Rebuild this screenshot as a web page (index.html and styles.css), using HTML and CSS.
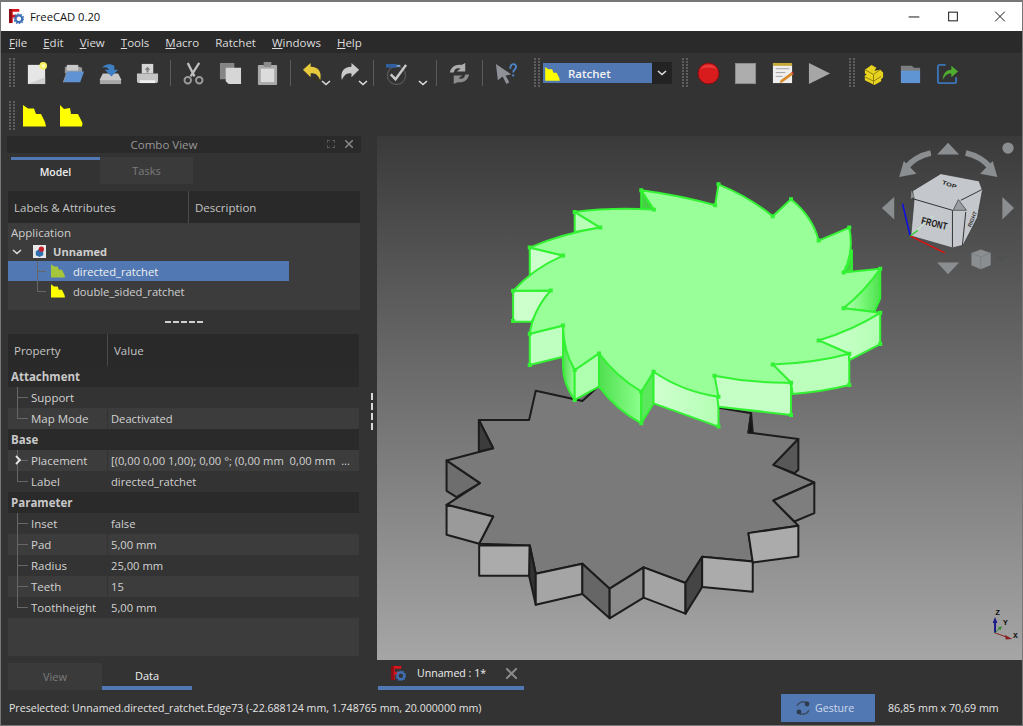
FILE: index.html
```html
<!DOCTYPE html>
<html lang="en">
<head>
<meta charset="utf-8">
<title>FreeCAD 0.20</title>
<link rel="stylesheet" href="styles.css">
</head>
<body>
<svg class="defs" width="0" height="0" aria-hidden="true">
  <defs>
    <symbol id="fc" viewBox="0 0 16 16">
      <path d="M0 0h11v3H4v3h5v3H4v6H0z" fill="#d8141c"/>
      <path d="M0 0h3v15H0z" fill="#8d0f14"/>
      <circle cx="10.5" cy="10.5" r="3.6" fill="none" stroke="#3f6fb5" stroke-width="2.4"/>
      <circle cx="10.5" cy="10.5" r="5.2" fill="none" stroke="#3f6fb5" stroke-width="1.2" stroke-dasharray="1.6 1.6"/>
    </symbol>
    <symbol id="rat" viewBox="0 0 23 22">
      <path d="M0 0l5 3.500h6l2 5.500h5l4 8 1 4.500H0z" fill="#ffff00"/>
    </symbol>
    <symbol id="rat2" viewBox="0 0 23 22">
      <path d="M0 0l4 4 6-1 1 6h7l4.500 9-.5 3.500H0z" fill="#ffff00"/>
    </symbol>
    <symbol id="ratg" viewBox="0 0 23 22">
      <path d="M0 0l5 3.500h6l2 5.500h5l4 8 1 4.500H0z" fill="#a5c63a"/>
    </symbol>
    <symbol id="chev" viewBox="0 0 10 6">
      <path d="M1 1l4 3.500L9 1" fill="none" stroke="#ddd" stroke-width="1.600"/>
    </symbol>
  </defs>
</svg>

<div class="window">
  <header class="titlebar">
    <svg class="title-icon"><use href="#fc"/></svg>
    <span class="title-text">FreeCAD 0.20</span>
    <div class="win-controls">
      <svg class="wc wc-min" viewBox="0 0 46 30"><path d="M17.500 15.500h11" stroke="#111" fill="none"/></svg>
      <svg class="wc wc-max" viewBox="0 0 46 30"><rect x="18.500" y="10.500" width="9" height="9" fill="none" stroke="#111"/></svg>
      <svg class="wc" viewBox="0 0 46 30"><path d="M18 10l10 10M28 10L18 20" stroke="#111" fill="none"/></svg>
    </div>
  </header>

  <nav class="menubar">
    <span><u>F</u>ile</span><span><u>E</u>dit</span><span><u>V</u>iew</span><span><u>T</u>ools</span><span><u>M</u>acro</span><span>Ratchet</span><span><u>W</u>indows</span><span><u>H</u>elp</span>
  </nav>

  <div class="toolbar tb1">
    <i class="grip"></i>
    <span class="tool"><svg viewBox="0 0 24 24"><rect x="3" y="3" width="18" height="20" fill="#e6e6e6"/><path d="M3 23h18V16z" fill="#cfcfcf"/><circle cx="19" cy="4" r="4" fill="#f6f060"/><circle cx="19" cy="4" r="2" fill="#fffbb0"/></svg></span>
    <span class="tool"><svg viewBox="0 0 24 24"><path d="M3 5h15l3 1v6H3z" fill="#9b9b9b"/><path d="M5 3h12v6H5z" fill="#c9c9c9"/><path d="M5 10h18l-4 11H1z" fill="#5f93d3"/><path d="M1 21L5 10v2l-3 9z" fill="#8b8b8b"/></svg></span>
    <span class="tool"><svg viewBox="0 0 24 24"><path d="M4 12h16l3 6v5H1v-5z" fill="#c8c8c8"/><path d="M1 19h22v4H1z" fill="#a6a6a6"/><path d="M3 6c3-4 9-5 13-2v4h4l-7 7-7-7h4c0-2-4-3-7-2z" fill="#3f7fc4"/></svg></span>
    <span class="tool"><svg viewBox="0 0 24 24"><path d="M6 2h12v10H6z" fill="#d5d5d5"/><path d="M1 12h22v8c0 1-1 2-2 2H3c-1 0-2-1-2-2z" fill="#c4c4c4"/><path d="M4 19h16v3H4z" fill="#efefef"/><path d="M12 5l3 3h-2v3h-2V8H9z" fill="#7d7d7d"/></svg></span>
    <i class="sep"></i>
    <span class="tool"><svg viewBox="0 0 24 24"><path d="M6 1l7 14M18 1L9 15" stroke="#bfbfbf" stroke-width="2.400" fill="none"/><circle cx="6" cy="19" r="3.400" fill="none" stroke="#9c9c9c" stroke-width="2"/><circle cx="18" cy="19" r="3.400" fill="none" stroke="#9c9c9c" stroke-width="2"/></svg></span>
    <span class="tool"><svg viewBox="0 0 24 24"><rect x="1" y="1" width="15" height="17" fill="#858585"/><path d="M7 6h16v17H10l-3-3z" fill="#d6d6d6"/></svg></span>
    <span class="tool"><svg viewBox="0 0 24 24"><rect x="2" y="3" width="20" height="21" rx="1" fill="#a9a9a9"/><rect x="8" y="0" width="8" height="5" fill="#8a8a8a"/><path d="M5 7h14v14H5z" fill="#dcdcdc"/></svg></span>
    <i class="sep"></i>
    <span class="tool tool-chev"><svg viewBox="0 0 24 24"><path d="M1 8l8-7v4c8 0 12 5 10 14-2-5-5-8-10-7v4z" fill="#e7c93c"/><path d="M11 18c4 0 8 2 8 1" stroke="#3a3010" fill="none"/></svg><svg class="mini"><use href="#chev"/></svg></span>
    <span class="tool tool-chev"><svg viewBox="0 0 24 24"><path d="M21 8l-8-7v4C5 5 1 10 3 19c2-5 5-8 10-7v4z" fill="#c9c9c9"/></svg><svg class="mini"><use href="#chev"/></svg></span>
    <i class="sep"></i>
    <span class="tool tool-wide"><svg viewBox="0 0 24 24"><circle cx="12" cy="14" r="9.500" fill="none" stroke="#555" stroke-width="1.400"/><path d="M1 2h11v4H1z" fill="#2f5f9f"/><path d="M12 3h4v2h-4z" fill="#7aa7d8"/><path d="M6 13l5 5L22 3" fill="none" stroke="#c9c9c9" stroke-width="2.600"/></svg><svg class="mini2"><use href="#chev"/></svg></span>
    <i class="sep"></i>
    <span class="tool"><svg viewBox="0 0 24 24"><path d="M2 11C3 5 8 2 14 3l4-2v9h-9l4-3c-4-1-6 0-7 4z" fill="#adadad"/><path d="M22 13c-1 6-6 9-12 8l-4 2v-9h9l-4 3c4 1 6 0 7-4z" fill="#8c8c8c"/></svg></span>
    <i class="sep"></i>
    <span class="tool"><svg viewBox="0 0 24 24"><path d="M2 2l16 11-6 1 4 7-3 2-4-8-5 4z" fill="#8e9298"/><path d="M17 7c0-6 6-6 6-2 0 3-3 3-3 6" fill="none" stroke="#4d86c8" stroke-width="2"/><circle cx="20" cy="14" r="1.200" fill="#4d86c8"/></svg></span>
    <i class="grip grip-a"></i>
    <div class="combo">
      <div class="combo-box"><svg class="combo-icon"><use href="#rat"/></svg><b>Ratchet</b></div>
      <div class="combo-arrow"><svg class="combo-chev"><use href="#chev"/></svg></div>
    </div>
    <i class="grip grip-b"></i>
    <span class="tool"><svg viewBox="0 0 24 24"><circle cx="12" cy="12" r="11" fill="#d81c1e" stroke="#7d1012"/><path d="M3 8a10 9 0 0 1 18 0c-3-3-15-3-18 0z" fill="#ea3a3a"/></svg></span>
    <span class="tool"><svg viewBox="0 0 24 24"><rect x="1.500" y="1.500" width="21" height="21" fill="#adadad" stroke="#8c8c8c"/></svg></span>
    <span class="tool"><svg viewBox="0 0 24 24"><rect x="2" y="2" width="20" height="20" fill="#eee"/><path d="M2 1h20v3H2z" fill="#c7a83a"/><path d="M5 7h14M5 11h10M5 15h7" stroke="#a0a0a0"/><path d="M10 19l11-8 2 2-11 8-3 1z" fill="#d98a2b"/><path d="M21 11l2 2 1-1-2-2z" fill="#d8322e"/></svg></span>
    <span class="tool"><svg viewBox="0 0 24 24"><path d="M1 1l22 11L1 23z" fill="#a6a6a6"/></svg></span>
    <i class="grip grip-c"></i>
    <span class="tool"><svg viewBox="0 0 24 24"><path d="M3 8l7-5 5 3-2 3 6-1 3 3v5l-2 2v2l-7 4-10-5v-5l2-1-2-1z" fill="#e8d41e"/><path d="M3 8l9 5 7-5M2 15l10 5 8-5M12 13v11" fill="none" stroke="#8d7d10" stroke-width="1"/></svg></span>
    <span class="tool"><svg viewBox="0 0 24 24"><path d="M2 4h11l3 2h6v16H2z" fill="#7d7d7d"/><path d="M2 9h20v13H2z" fill="#5f95d2"/></svg></span>
    <span class="tool"><svg viewBox="0 0 24 24"><path d="M10 3H4c-1 0-2 1-2 2v15c0 1 1 2 2 2h15c1 0 2-1 2-2v-4" fill="none" stroke="#3b74b5" stroke-width="2"/><path d="M7 19c0-7 4-11 9-11V4l7 6-7 6v-4c-4 0-7 2-9 7z" fill="#4fae2f"/></svg></span>
  </div>

  <div class="toolbar tb2">
    <i class="grip"></i>
    <span class="tool"><svg class="rat-big"><use href="#rat"/></svg></span>
    <span class="tool"><svg class="rat-big"><use href="#rat2"/></svg></span>
  </div>

  <main class="main">
    <aside class="panel">
      <div class="dock-title">
        <span>Combo View</span>
        <svg class="dock-btn b1" viewBox="0 0 8 8"><path d="M0 3V0h3M5 0h3v3M8 5v3H5M3 8H0V5" fill="none" stroke="#777"/></svg>
        <svg class="dock-btn b2" viewBox="0 0 8 8"><path d="M0 0l8 8M8 0L0 8" fill="none" stroke="#888" stroke-width="1.500"/></svg>
      </div>
      <div class="tabs top-tabs">
        <span class="tab on">Model</span><span class="tab off">Tasks</span>
      </div>

      <section class="tree">
        <div class="head"><span class="h1">Labels &amp; Attributes</span><span class="h2">Description</span></div>
        <div class="tree-body">
          <div class="t-row t-app">Application</div>
          <div class="t-row t-doc">
            <svg class="t-chev"><use href="#chev"/></svg>
            <svg class="t-doc-icon" viewBox="0 0 14 14"><rect width="14" height="14" fill="#e8e8e8"/><path d="M3 7l4-3 4 2v5l-4 2-4-2z" fill="#2f6fb0"/><circle cx="9" cy="4.500" r="2.800" fill="#c8202a"/></svg>
            <b>Unnamed</b>
          </div>
          <div class="t-row t-item sel"><i class="t-br"></i><svg class="t-icon"><use href="#ratg"/></svg>directed_ratchet</div>
          <div class="t-row t-item"><i class="t-br last"></i><svg class="t-icon"><use href="#rat"/></svg>double_sided_ratchet</div>
        </div>
      </section>

      <div class="splitter"><i></i><i></i><i></i><i></i><i></i></div>

      <section class="props">
        <div class="head p-head"><span class="h1">Property</span><span class="h2">Value</span></div>
        <div class="group">Attachment</div>
        <div class="row"><span class="name"><i class="br"></i>Support</span><span class="val"></span></div>
        <div class="row alt"><span class="name"><i class="br end"></i>Map Mode</span><span class="val">Deactivated</span></div>
        <div class="group">Base</div>
        <div class="row alt"><span class="name"><i class="br"></i><svg class="p-chev" viewBox="0 0 6 10"><path d="M1 1l4 4-4 4" fill="none" stroke="#e8e8e8" stroke-width="1.800"/></svg>Placement</span><span class="val pre">[(0,00 0,00 1,00); 0,00 °; (0,00 mm  0,00 mm  ...</span></div>
        <div class="row"><span class="name"><i class="br end"></i>Label</span><span class="val">directed_ratchet</span></div>
        <div class="group">Parameter</div>
        <div class="row"><span class="name"><i class="br"></i>Inset</span><span class="val">false</span></div>
        <div class="row alt"><span class="name"><i class="br"></i>Pad</span><span class="val">5,00 mm</span></div>
        <div class="row"><span class="name"><i class="br"></i>Radius</span><span class="val">25,00 mm</span></div>
        <div class="row alt"><span class="name"><i class="br"></i>Teeth</span><span class="val">15</span></div>
        <div class="row"><span class="name"><i class="br end"></i>Toothheight</span><span class="val">5,00 mm</span></div>
        <div class="p-empty"></div>
      </section>

      <div class="tabs bottom-tabs">
        <span class="tab off">View</span><span class="tab on under">Data</span>
      </div>
    </aside>

    <div class="vsplit"><i></i><i></i><i></i><i></i></div>

    <section class="view3d">
      <div class="canvas">
        <svg class="scene" viewBox="377 136 646 524">
          <defs>
            <linearGradient id="gr1" x1="0" x2="1" y1="0" y2="0"><stop offset="0" stop-color="#4fdc4f"/><stop offset="1" stop-color="#99ff99"/></linearGradient>
            <linearGradient id="gr2" x1="0" x2="1" y1="0" y2="0"><stop offset="0" stop-color="#b5ffb5"/><stop offset=".6" stop-color="#70f570"/><stop offset="1" stop-color="#4fe04f"/></linearGradient>
            <linearGradient id="gr3" x1="0" x2="1" y1="0" y2="0"><stop offset="0" stop-color="#4fe04f"/><stop offset="1" stop-color="#8cff8c"/></linearGradient>
            <linearGradient id="gr4" x1="0" x2="1" y1="0" y2="0"><stop offset="0" stop-color="#d0ffd0"/><stop offset="1" stop-color="#b4ffb4"/></linearGradient>
          </defs>

          <g transform="translate(430 380) scale(.33333)" stroke="#1c1c1c" stroke-width="6" stroke-linejoin="round">
            <path fill="#7a7a7a" d="M318 32L298 120H147L190 205 50 242 150 310 50 375 190 410 148 492 300 497 318 582 458 552 540 627 642 563 768 610 818 531 970 545 957 460 1107 438 1032 362 1155 308 1032 255 1107 177 957 158 965 100 505 20 458 63z"/>
            <path fill="#3c3c3c" d="M147 120L190 205 147 215z"/>
            <path fill="#6e6e6e" d="M50 242L150 310 80 352 50 333z"/>
            <path fill="#9a9a9a" d="M50 375L190 410 148 492 50 465z"/>
            <path fill="#ababab" d="M148 497H300V588H148z"/>
            <path fill="#333" d="M300 497L318 582V675L298 588z"/>
            <path fill="#a5a5a5" d="M318 582L458 552V643L318 675z"/>
            <path fill="#666" d="M458 552L540 627V716L458 643z"/>
            <path fill="#8a8a8a" d="M540 627L642 563V654L540 716z"/>
            <path fill="#a4a4a4" d="M642 563L768 610V702L642 654z"/>
            <path fill="#454545" d="M768 610L818 531V622L768 702z"/>
            <path fill="#ababab" d="M818 531L970 545V636L818 622z"/>
            <path fill="#ababab" d="M957 460L1107 438V530L970 548z"/>
            <path fill="#7e7e7e" d="M1032 362L1155 308V400L1095 425z"/>
            <path fill="#585858" d="M1032 255L1107 177V270L1095 280z"/>
            <path fill="#111" d="M965 100L957 158 970 158z"/>
          </g>

          <g transform="translate(500 170) scale(.33333)" stroke="#33f233" stroke-width="6" stroke-linejoin="round">
            <path fill="#ccffcc" d="M40 362H153L95 455H40z"/>
            <path fill="#ccffcc" d="M90 232L190 256 90 315z"/>
            <path fill="#b8ffb8" d="M225 125L302 172 225 185z"/>
            <path fill="#43d043" d="M425 60L463 118H425z"/>
            <path fill="#bfffbf" d="M90 491L190 466V560L90 585z"/>
            <path fill="url(#gr1)" d="M190 520L225 600V690Q190 640 190 590z"/>
            <path fill="#b0ffb0" d="M225 600L298 550V650L225 690z"/>
            <path fill="url(#gr3)" d="M298 550L425 665V760Q350 720 298 650z"/>
            <path fill="#5ce85c" d="M462 605L425 665V760L462 700z"/>
            <path fill="url(#gr4)" d="M462 605L657 680V770L462 700z"/>
            <path fill="#c6ffc6" d="M645 617L657 710 875 735V638z"/>
            <path fill="#bcffbc" d="M820 583L1050 551V645Q970 665 880 672L875 638z"/>
            <path fill="url(#gr4)" d="M958 511L1143 428V522L1050 570 1050 551z"/>
            <path fill="url(#gr2)" d="M1033 414L1143 296V385L1125 425z"/>
            <path fill="#46d046" d="M1033 307Q1050 285 1058 240V300z"/>
            <path fill="#99ff99" d="M425 60Q540 75 647 105L657 42Q750 80 820 138L875 87Q940 140 958 211L1050 172Q1065 245 1033 307L1143 296Q1095 365 1033 414L1143 428Q1060 480 958 511L1050 551Q940 580 820 583L875 638Q760 640 645 617L657 680Q550 665 462 605L425 665Q350 620 298 550L225 600Q190 540 190 466L90 491Q100 420 153 361L40 362Q100 295 190 256L90 232Q190 190 302 172L225 125Q340 110 463 118z"/>
            <path fill="none" stroke-width="12" stroke-linecap="square" d="M425 60h0M647 105h0M657 42h0M820 138h0M875 87h0M958 211h0M1050 172h0M1033 307h0M1143 296h0M1033 414h0M1143 428h0M958 511h0M1050 551h0M820 583h0M875 638h0M645 617h0M657 680h0M462 605h0M425 665h0M298 550h0M225 600h0M190 466h0M90 491h0M153 361h0M40 362h0M190 256h0M90 232h0M302 172h0M225 125h0M463 118h0M425 760h0M657 770h0M875 735h0M1050 645h0M1143 522h0M90 585h0M40 453h0M225 690h0"/>
          </g>

          <g transform="translate(870 130) scale(.33333)">
            <g fill="#8b8e91">
              <path d="M237 37L204 72H270z"/>
              <path d="M38 233L75 200V268z"/>
              <path d="M435 233L400 200V268z"/>
              <path d="M204 397H270L237 432z"/>
              <circle cx="417" cy="53" r="17"/>
              <path d="M185 68Q140 78 112 110" fill="none" stroke="#8b8e91" stroke-width="17"/>
              <path d="M90 140L142 130 104 92z"/>
              <path d="M290 68Q335 78 363 110" fill="none" stroke="#8b8e91" stroke-width="17"/>
              <path d="M385 140L333 130 371 92z"/>
              <path d="M307 368L335 358 365 368V405L335 417 307 405z"/>
              <path d="M380 378H415L397 396z" fill="#4e5052"/>
            </g>
            <path d="M307 368L335 380 365 368M335 380V417" fill="none" stroke="#777a7d" stroke-width="2"/>
            <path d="M130 182L215 130 330 152 340 180 325 262 282 345 250 353 125 317 135 205z" fill="#c4c7cb" stroke="#333" stroke-width="2"/>
            <path d="M130 205L250 240V352M275 210L338 178M290 245L280 345" fill="none" stroke="#333" stroke-width="3"/>
            <path d="M268 208L252 240H292z" fill="#9a9da1" stroke="#333" stroke-width="2"/>
            <path d="M126 180L136 200 125 205z" fill="#8a8d90"/>
            <path d="M123 317L195 255" stroke="#c8f0c8" stroke-width="3"/>
            <path d="M123 317L100 220" stroke="#1010e0" stroke-width="5"/>
            <path d="M123 317L227 368" stroke="#e01010" stroke-width="4"/>
            <path d="M123 317L146 300" stroke="#22cc22" stroke-width="4"/>
            <text class="cube-front" transform="translate(155 280) rotate(14) scale(.95 1.250)">FRONT</text>
            <text class="cube-top" transform="translate(218 160) rotate(20) scale(1.100 .8)">TOP</text>
            <text class="cube-right" transform="translate(306 292) rotate(-68)">RIGHT</text>
          </g>

          <g transform="translate(760 590) scale(.33333)">
            <path d="M708 130V95" stroke="#1a1a8a" stroke-width="6"/><path d="M708 82L701 100H715z" fill="#1a1a8a"/>
            <path d="M708 130L745 143" stroke="#8a2020" stroke-width="3"/><path d="M760 148L738 136 740 150z" fill="#8a2020"/>
            <path d="M708 130L724 114" stroke="#2c8a2c" stroke-width="3"/><path d="M729 110L716 114 724 122z" fill="#2c8a2c"/>
            <text class="axis" x="709" y="76">Z</text>
            <text class="axis" x="732" y="107">Y</text>
            <text class="axis" x="762" y="146">X</text>
          </g>
        </svg>
      </div>
      <div class="doc-tabs">
        <span class="doc-tab"><svg class="doc-icon"><use href="#fc"/></svg><span>Unnamed : 1*</span><svg class="doc-x" viewBox="0 0 10 10"><path d="M0 0l10 10M10 0L0 10" stroke="#8a8a8a" stroke-width="1.800"/></svg></span>
      </div>
    </section>
  </main>

  <footer class="status">
    <span class="status-msg">Preselected: Unnamed.directed_ratchet.Edge73 (-22.688124 mm, 1.748765 mm, 20.000000 mm)</span>
    <span class="gesture"><svg class="g-icon" viewBox="0 0 16 14"><path d="M2 5c1-3 5-5 9-4" fill="none" stroke="#3d4f66" stroke-width="1.600"/><path d="M14 9c-1 3-5 5-9 4" fill="none" stroke="#3d4f66" stroke-width="1.600"/><circle cx="12" cy="3" r="2.400" fill="#2c3a4c"/><circle cx="4" cy="11" r="2.400" fill="#2c3a4c"/></svg>Gesture</span>
    <span class="dims">86,85 mm x 70,69 mm</span>
  </footer>
</div>
</body>
</html>
```

FILE: styles.css
```css
* { box-sizing: border-box; }
html, body { margin: 0; padding: 0; width: 1023px; height: 726px; overflow: hidden; background: #333; }
body { font-family: "Open Sans", "Noto Sans", sans-serif; font-size: 11.5px; color: #dcdcdc; }
i { display: block; font-style: normal; }
.defs { display: block; height: 0; }

.window { display: flex; flex-direction: column; width: 1023px; height: 726px; border: 1px solid #777; border-top-width: 2px; background: #333; }

.titlebar { display: flex; align-items: center; height: 29px; flex: none; background: #fff; color: #111; padding-left: 8px; }
.title-icon { width: 15px; height: 15px; }
.title-text { margin-left: 6px; font-size: 11.2px; }
.win-controls { display: flex; margin-left: auto; margin-right: -1px; }
.wc { width: 46px; height: 29px; display: block; }
.wc-min { margin-right: -6px; }
.wc-max { position: relative; left: -1px; }

.menubar { display: flex; gap: 16px; height: 22px; flex: none; align-items: center; background: #2a2a2a; padding-left: 8px; color: #ddd; font-size: 11.5px; }
.menubar u { text-underline-offset: 1px; }

.toolbar { display: flex; align-items: center; flex: none; background: #333; padding-left: 8px; }
.tb1 { height: 42px; padding-bottom: 2px; }
.tb2 { height: 41px; }
.grip { width: 6px; height: 30px; flex: none; background: linear-gradient(to right, #5e5e5e 2px, transparent 2px) 0 0 / 4px 100%; -webkit-mask: repeating-linear-gradient(#000 0 2px, transparent 2px 3px); mask: repeating-linear-gradient(#000 0 2px, transparent 2px 3px); }
.tool { display: flex; align-items: center; justify-content: center; position: relative; width: 37px; height: 32px; flex: none; }
.tool > svg { width: 23px; height: 23px; display: block; }
.toolbar .tool > svg.mini { position: absolute; width: 10px; height: 6px; right: 1px; bottom: 3px; }
.toolbar .tool > svg.mini2 { position: absolute; width: 10px; height: 6px; right: 4px; bottom: 3px; }
.tb1 > .grip:first-child + .tool { margin-left: 3px; }
.tool-wide { width: 54px; justify-content: flex-start; padding-left: 7px; }
.sep { width: 1px; height: 26px; background: #5a5a5a; margin: 0 4px; flex: none; }
.grip-a { margin-left: 10px; }
.combo { display: flex; align-items: stretch; height: 22px; margin-left: 3px; flex: none; }
.combo-box { display: flex; align-items: center; width: 109px; margin: 1px 0; background: #5278b4; color: #f2f2f2; font-size: 11.5px; }
.combo-box b { font-weight: 600; margin-left: 8px; }
.combo-icon { width: 15px; height: 14px; margin-left: 2px; margin-top: 1px; }
.combo-arrow { display: flex; align-items: center; justify-content: center; width: 20px; background: #232323; }
.combo-chev { width: 10px; height: 6px; }
.grip-b { margin-left: 10px; margin-right: 2px; }
.grip-c { margin-left: 11px; }
.tb2 .grip { margin-right: 1px; }
.rat-big { width: 23px !important; height: 22px !important; }

.main { display: flex; flex: 1; min-height: 0; }

.panel { display: flex; flex-direction: column; width: 360px; flex: none; padding-left: 6px; }
.dock-title { position: relative; height: 17px; margin-bottom: 4px; flex: none; width: 354px; padding-right: 40px; background: #2a2a2a; color: #989898; text-align: center; line-height: 17px; font-size: 11.5px; }
.dock-btn { position: absolute; top: 4px; width: 8px; height: 8px; }
.b1 { left: 320px; }
.b2 { left: 338px; }

.tabs { display: flex; flex: none; }
.tab { display: flex; align-items: center; justify-content: center; height: 27px; font-size: 11px; }
.top-tabs { margin-left: 4px; }
.top-tabs .tab.on { width: 89px; border-top: 3px solid #5278b4; color: #eee; font-size: 10.5px; font-weight: 600; padding-bottom: 1px; }
.top-tabs .tab.off { width: 93px; background: #3a3a3a; color: #7c7c7c; }

.head { display: flex; align-items: center; background: #292929; color: #c4c4c4; flex: none; }
.tree { margin: 7px 0 0 1px; width: 352px; flex: none; }
.tree .head { height: 32px; }
.tree .h1 { width: 181px; padding-left: 6px; height: 100%; display: flex; align-items: center; border-right: 1px solid #4a4a4a; }
.tree .h2 { padding-left: 6px; }
.tree-body { height: 87px; background: #3c3c3c; }
.t-row { display: flex; align-items: center; height: 20px; width: 281px; color: #cfcfcf; }
.t-app { padding-left: 3px; height: 19px; }
.t-doc { height: 19px; }
.t-chev { width: 10px; height: 6px; margin-left: 4px; }
.t-doc-icon { width: 13px; height: 13px; margin-left: 11px; }
.t-doc b { margin-left: 7px; font-weight: 700; font-size: 11.1px; }
.t-item { padding-left: 29px; font-size: 11.2px; }
.t-item.sel { background: #5278b4; color: #f0f0f0; }
.t-icon { width: 14px; height: 14px; margin-left: 5px; margin-right: 8px; }
.t-br { width: 9px; height: 20px; background: linear-gradient(#666, #666) 0 0 / 1px 100% no-repeat, linear-gradient(#666, #666) 0 10px / 100% 1px no-repeat; }
.t-br.last { background: linear-gradient(#666, #666) 0 0 / 1px 11px no-repeat, linear-gradient(#666, #666) 0 10px / 100% 1px no-repeat; }

.splitter { display: flex; justify-content: center; gap: 2px; height: 24px; width: 354px; align-items: center; flex: none; }
.splitter i { width: 6px; height: 2px; background: #d0d0d0; }

.props { margin-left: 1px; width: 351px; flex: none; display: flex; flex-direction: column; }
.p-head { height: 32px; }
.p-head .h1 { width: 100px; padding-left: 6px; height: 100%; display: flex; align-items: center; border-right: 1px solid #4a4a4a; }
.p-head .h2 { padding-left: 6px; }
.group { height: 21px; padding-left: 3px; background: #2a2a2a; font-weight: 700; color: #c8c8c8; line-height: 21px; }
.row { display: flex; height: 21px; background: #333; line-height: 22px; color: #d2d2d2; }
.row.alt { background: #3c3c3c; }
.name { position: relative; display: flex; align-items: stretch; width: 99px; padding-left: 9px; flex: none; }
.br { width: 14px; flex: none; background: linear-gradient(#666, #666) 0 0 / 1px 100% no-repeat, linear-gradient(#666, #666) 0 10px / 11px 1px no-repeat; }
.br.end { background: linear-gradient(#666, #666) 0 0 / 1px 11px no-repeat, linear-gradient(#666, #666) 0 10px / 11px 1px no-repeat; }
.p-chev { position: absolute; left: 7px; top: 5px; width: 6px; height: 10px; }
.val { padding-left: 3px; border-left: 1px solid #333; flex: 1; font-size: 11.2px; }
.row:not(.alt) .val { border-left-color: transparent; }
.pre { white-space: pre; }
.p-empty { height: 38px; background: #3c3c3c; }

.bottom-tabs { margin-top: 7px; margin-left: 1px; }
.bottom-tabs .tab.off { width: 94px; background: #3a3a3a; color: #7c7c7c; }
.bottom-tabs .tab.under { width: 90px; border-bottom: 4px solid #5278b4; color: #eee; padding-top: 2px; }

.vsplit { display: flex; flex-direction: column; gap: 3px; width: 16px; flex: none; padding-top: 257px; align-items: center; padding-left: 6px; }
.vsplit i { width: 2px; height: 7px; background: #d8d8d8; }

.view3d { display: flex; flex-direction: column; flex: 1; min-width: 0; }
.canvas { height: 524px; flex: none; background: linear-gradient(#3a3a3a, #a6a6a6); }
.scene { display: block; width: 645px; height: 524px; }
.doc-tabs { display: flex; flex: 1; padding-left: 1px; }
.doc-tab { display: flex; align-items: center; width: 146px; height: 30px; border-bottom: 4px solid #5278b4; padding: 0 7px 0 13px; color: #eee; font-size: 10.6px; }
.doc-icon { width: 15px; height: 15px; margin-right: 11px; }
.doc-x { width: 11px; height: 11px; margin-left: auto; }
.cube-front { font: 700 24px "Liberation Sans", sans-serif; fill: #181818; }
.cube-top { font: 700 20px "Liberation Sans", sans-serif; fill: #222; }
.cube-right { font: 700 16px "Liberation Sans", sans-serif; fill: #333; }
.axis { font: 700 24px "Liberation Mono", monospace; fill: #111; }

.status { display: flex; align-items: center; height: 35px; flex: none; padding-left: 8px; color: #e4e4e4; font-size: 10.6px; }
.status-msg { width: 772px; flex: none; }
.gesture { display: flex; align-items: center; width: 94px; height: 28px; background: #5278b4; color: #cfd9ea; padding-left: 14px; }
.g-icon { width: 16px; height: 14px; margin-right: 4px; }
.dims { margin-left: 13px; font-size: 10.7px; }
```
